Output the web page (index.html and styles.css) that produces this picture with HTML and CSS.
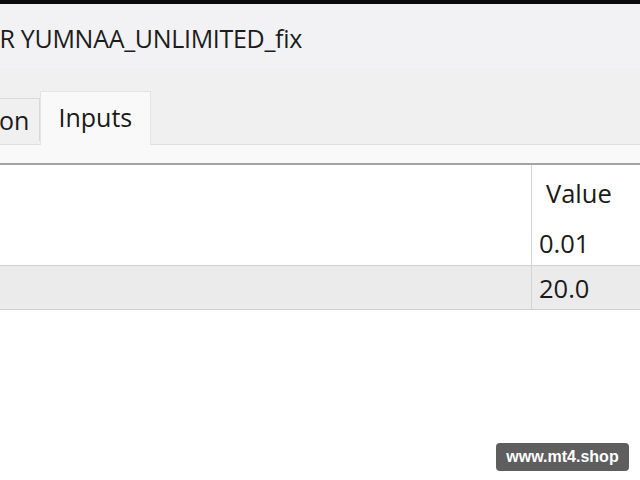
FILE: index.html
```html
<!DOCTYPE html>
<html lang="en">
<head>
    <meta charset="UTF-8">
    <meta name="viewport" content="width=device-width, initial-scale=1.0">
    <title>EA Properties - YUMNAA_UNLIMITED_fix</title>
    <link rel="stylesheet" href="styles.css">
</head>
<body>
    <div class="window">
        <div class="topbar"></div>
        <div class="titlebar">
            <div class="title-clip">
                <span class="title">Expert - EA_GOLD_TRADER YUMNAA_UNLIMITED_fix</span>
            </div>
        </div>
        <div class="tabs">
            <div class="tab">Common</div>
            <div class="tab active">Inputs</div>
        </div>
        <div class="tab-strip"></div>

        <div class="grid">
            <div class="cell head name"></div>
            <div class="cell head value">Value</div>

            <div class="cell name"></div>
            <div class="cell value first">0.01</div>

            <div class="cell name alt"><span class="clip">Lots</span></div>
            <div class="cell value alt">20.0</div>
        </div>
    </div>

    <div class="watermark">www.mt4.shop</div>
</body>
</html>
```

FILE: styles.css
```css
body {
    margin: 0;
    padding: 0;
    width: 640px;
    height: 480px;
    overflow: hidden;
    background: #ffffff;
    font-family: "Open Sans", "Noto Sans", sans-serif;
    color: #1a1a1a;
    position: relative;
}

.window {
    display: flex;
    flex-direction: column;
}

.topbar {
    height: 4px;
    background: #0a0a0a;
}

.titlebar {
    height: 64px;
    background: #f2f2f4;
}

.title-clip {
    width: 302px;
    height: 100%;
    display: flex;
    align-items: center;
    justify-content: flex-end;
    overflow: hidden;
    white-space: nowrap;
}

.title {
    font-size: 25px;
    letter-spacing: -0.3px;
    padding-top: 4px;
    color: #1c1c1c;
}

.tabs {
    height: 76px;
    background: #f0f0f0;
    border-bottom: 1px solid #e0e0e0;
    display: flex;
    align-items: flex-end;
    margin-left: -95px;
}

.tab {
    height: 42px;
    margin-bottom: 3px;
    padding: 0 10px 0 16px;
    font-size: 25px;
    line-height: 42px;
    background: #f0f0f0;
    border: 1px solid #d9d9d9;
    border-bottom: none;
}

.tab.active {
    height: 53px;
    margin-bottom: -1px;
    padding: 0 18px 0 17px;
    line-height: 50px;
    background: #f9f9f9;
    border-color: #e4e4e4;
    position: relative;
    z-index: 1;
}

.tab-strip {
    height: 18px;
    background: #f9f9f9;
    border-bottom: 2px solid #a3a3a3;
}

.grid {
    display: grid;
    grid-template-columns: 531px 1fr;
    grid-template-rows: 60px 40px 44px;
    border-bottom: 1px solid #cfcfcf;
}

.cell {
    font-size: 25.5px;
    display: flex;
    align-items: center;
    overflow: hidden;
}

.cell.value {
    border-left: 1px solid #d4d4d4;
    padding-left: 7px;
}

.cell.value.first {
    padding-bottom: 4px;
}

.cell.head.value {
    padding-left: 14px;
    padding-bottom: 4px;
}

.cell.alt {
    background: #ebebeb;
    border-top: 1px solid #cfcfcf;
}

.clip {
    margin-left: -50px;
    color: #777777;
}

.watermark {
    position: absolute;
    left: 496px;
    top: 443px;
    width: 133px;
    height: 28px;
    border-radius: 4px;
    background: #5e5e5e;
    color: #ffffff;
    font-family: "Liberation Sans", Arial, sans-serif;
    font-weight: bold;
    font-size: 16px;
    line-height: 28px;
    text-align: center;
}
```
